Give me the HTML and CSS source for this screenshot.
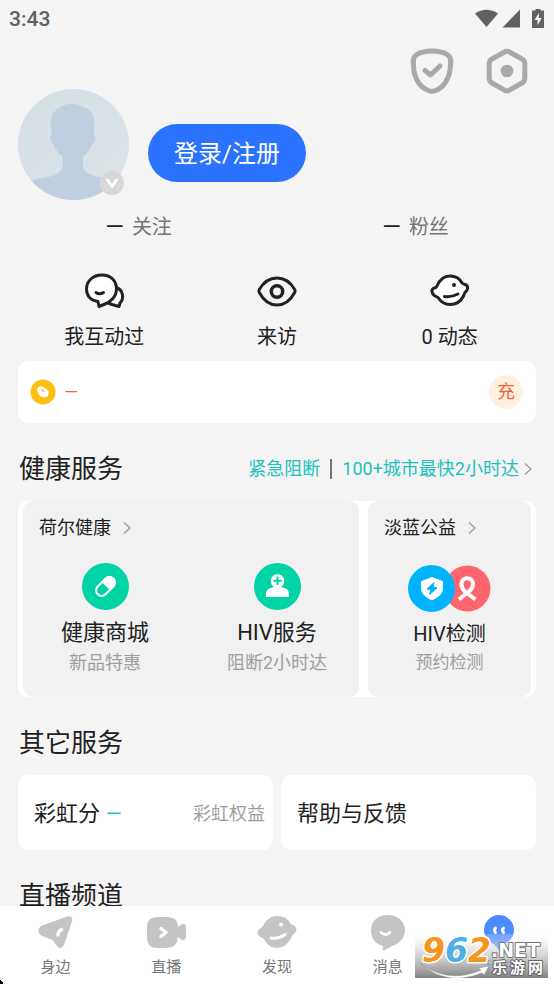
FILE: index.html
```html
<!DOCTYPE html>
<html lang="zh-CN">
<head>
<meta charset="utf-8">
<meta name="viewport" content="width=device-width, initial-scale=1">
<title>我的</title>
<link rel="stylesheet" href="styles.css">
</head>
<body>
<svg class="defs" width="0" height="0" aria-hidden="true">
  <symbol id="chevron" viewBox="0 0 8 14"><path d="M1 1.500L7 7L1 12.500" fill="none" stroke="currentColor" stroke-width="1.500"/></symbol>
</svg>
<header class="status">
  <span>3:43</span>
  <svg width="72" height="20" viewBox="0 0 72 20" fill="#616161" aria-hidden="true">
    <path d="M1 4.500Q12.500-3 24 4.500L12.500 18Z"/>
    <path d="M46 0.500V18.500H28.500Z"/>
    <path d="M61.500-.5h5v2h3.500v17.500h-12V1.500H61.500Z"/>
    <path d="M65 4L60.500 11h3v5.500L67.700 9h-2.900Z" fill="#f4f4f4"/>
  </svg>
</header>
<main>
  <div class="tools">
    <button aria-label="安全中心"><svg width="44" height="46" viewBox="0 0 44 46" fill="none" stroke="#a9a9a9" stroke-width="5" stroke-linecap="round" stroke-linejoin="round"><path d="M22 3C29 3 34 4 38 7C41 9 41 12 40.500 17C40 31 33 40 25.500 42.500Q22 44 18.500 42.500C11 40 3.500 31 3.500 17C3 12 3 9 6 7C10 4 15 3 22 3Z"/><path d="M15 22.500L20.500 27L30 18"/></svg></button>
    <button aria-label="设置"><svg width="44" height="46" viewBox="0 0 44 46" fill="none" stroke="#a9a9a9" stroke-width="5" stroke-linejoin="round"><path d="M19.500 4Q22 2.500 24.500 4L37 11Q39.800 12.500 39.800 16V30Q39.800 33.500 37 35L24.500 42.200Q22 43.500 19.500 42.200L7 35Q4.200 33.500 4.200 30V16Q4.200 12.500 7 11Z"/><circle cx="22" cy="23" r="6.300" fill="#a9a9a9" stroke="none"/></svg></button>
  </div>
  <section class="profile">
    <div class="avatar">
      <svg width="111" height="111" viewBox="0 0 111 111" aria-hidden="true">
        <defs><clipPath id="round"><circle cx="55.500" cy="55.500" r="55.500"/></clipPath><linearGradient id="sky" x2="1" y2="1"><stop stop-color="#d5dee3"/><stop offset="1" stop-color="#dce5e8"/></linearGradient></defs>
        <g clip-path="url(#round)"><path fill="url(#sky)" d="M0 0H111V111H0Z"/><path fill="#c0cfdf" d="M53 15C59 14 62 17 65 18C74 20 78 29 76 40L76 45C79 49 77 54 73 57C71 62 68 66 65 68V78C67 84 74 87 82 88C91 88 99 91 103 99V112H10V94C17 89 26 89 34 87C40 85 44 82 45 77V68C41 66 38 61 36 56C32 53 31 48 34 44C31 34 32 24 41 19C44 16 48 15 53 15Z"/></g>
      </svg>
      <svg class="badge" width="24" height="24" viewBox="0 0 24 24" aria-hidden="true"><circle cx="12" cy="12" r="12" fill="#d8d8d8"/><path d="M7.500 9L12 15.500L16.500 9" fill="none" stroke="#fff" stroke-width="3" stroke-linecap="round" stroke-linejoin="round"/></svg>
    </div>
    <button class="login">登录/注册</button>
  </section>
  <section class="follow">
    <a href="#following"><b>—</b>关注</a>
    <a href="#fans"><b>—</b>粉丝</a>
  </section>
  <section class="activity">
    <a href="#interactions"><svg width="42" height="40" viewBox="0 0 42 40" fill="#fff" stroke="#212121" stroke-width="3" stroke-linejoin="round" stroke-linecap="round"><path d="M33 16.500C41 19 41 28 37 32L36 35.500L29 33.500L23 31Z"/><path d="M19 4C28 4 33.500 10 33.500 18C33.500 26 27 31 22 33L16 35.500L15 30.500C8 29.500 3.500 25 3.500 18C3.500 10 10 4 19 4Z"/><path d="M13 21.500Q16.500 24 20.500 21.500" fill="none"/></svg>我互动过</a>
    <a href="#visits"><svg width="42" height="40" viewBox="0 0 42 40" fill="none" stroke="#212121" stroke-width="3"><path d="M3.300 18.500Q10 7 21 7T38.700 18.500Q39.500 20 38.700 21.500Q32 34 21 34T3.300 21.500Q2.500 20 3.300 18.500Z"/><circle cx="21" cy="20.500" r="5.700" stroke-width="3.500"/></svg>来访</a>
    <a href="#posts"><svg width="42" height="40" viewBox="0 0 42 40" fill="#fff" stroke="#212121" stroke-width="3" stroke-linejoin="round" stroke-linecap="round"><path d="M8 15C11 8 15 5 21 5C27 5 31 8 33 12Q34 13 36 13.500C40 15 39 19 36 21.500Q35 23 34.500 25C32 30 27 33.500 21 33.500C15 33.500 12 31 9 26.500L6 25C2 22 2 19 5 17Q7 17 8 15Z"/><path d="M15.500 25.500Q22 26.500 29 23" fill="none"/><circle cx="25" cy="14" r="2" fill="#212121" stroke="none"/></svg>0 动态</a>
  </section>
  <section class="wallet">
    <svg width="26" height="26" viewBox="0 0 26 26" aria-hidden="true"><circle cx="13" cy="13" r="12.500" fill="#fdbf0f"/><path d="M8 8.500C10 6.500 13 7 15 9.500C18 10 20 13 18 16.500C15 20 10 18 8.500 15C7 12 6.500 10 8 8.500Z" fill="#fff"/><path d="M12 10.500L13.500 12.500" stroke="#fdbf0f" stroke-width="1.500" stroke-linecap="round"/></svg>
    <span>—</span>
    <button>充</button>
  </section>
  <div class="heading">
    <h2>健康服务</h2>
    <a href="#urgent"><span>紧急阻断</span><i></i><span>100+城市最快2小时达</span><svg width="8" height="14"><use href="#chevron"/></svg></a>
  </div>
  <section class="health">
    <div class="panel wide">
      <a class="brand" href="#holmes">荷尔健康<svg width="8" height="14"><use href="#chevron"/></svg></a>
      <div class="services">
        <a href="#mall"><svg width="47" height="47" viewBox="0 0 47 47"><circle cx="23.500" cy="23.500" r="23.500" fill="#00d4a7"/><g transform="rotate(45 23.500 23.500)"><rect x="18" y="12.500" width="11" height="22" rx="5.500" fill="none" stroke="#fff" stroke-width="2"/><path d="M17 23V18A6.500 6.500 0 0 1 30 18V23Z" fill="#fff"/></g></svg><strong>健康商城</strong><small>新品特惠</small></a>
        <a href="#hiv"><svg width="47" height="47" viewBox="0 0 47 47"><circle cx="23.500" cy="23.500" r="23.500" fill="#00d4a7"/><path d="M12 34V31C12 26 16 25 20 24Q16 21 17 16A6.800 6.800 0 0 1 30 16Q31 21 27 24C31 25 35 26 35 31V34Z" fill="#fff"/><path d="M23.500 13.500V22M19.300 17.800H27.700" stroke="#00d4a7" stroke-width="2"/></svg><strong>HIV服务</strong><small>阻断2小时达</small></a>
      </div>
    </div>
    <div class="panel narrow">
      <a class="brand" href="#charity">淡蓝公益<svg width="8" height="14"><use href="#chevron"/></svg></a>
      <div class="services">
        <a href="#test"><svg width="83" height="47" viewBox="0 0 83 47"><circle cx="59.500" cy="23.500" r="23" fill="#fe656d"/><path d="M51 34.500L61 26.500Q65 23 65 19A5.800 5.800 0 0 0 53.400 19Q53.400 23 57 26.500L67.500 34.500" fill="none" stroke="#fff" stroke-width="4"/><circle cx="23.500" cy="23.500" r="23.500" fill="#00b3fe"/><path d="M24 12.500L34.500 16.500V23C34.500 29 30 32 24 35C18 32 13.500 29 13.500 23V16.500Z" fill="#fff" stroke="#fff" stroke-linejoin="round"/><path d="M26 17.500L19 24L23 24.500L21.500 29.500L29 23L25 22Z" fill="#00b3fe" stroke="#00b3fe" stroke-linejoin="round"/></svg><strong>HIV检测</strong><small>预约检测</small></a>
      </div>
    </div>
  </section>
  <div class="heading"><h2>其它服务</h2></div>
  <section class="others">
    <a href="#rainbow">彩虹分<b>—</b><small>彩虹权益</small></a>
    <a href="#help">帮助与反馈</a>
  </section>
  <div class="heading"><h2>直播频道</h2></div>
</main>
<nav>
  <a href="#near"><svg width="42" height="40" viewBox="0 0 42 40"><path d="M7 14L33 4.500Q39 3 38 9L30 33Q26.500 39 23 34L19.500 29Q18 27 15 26.500L8 24Q1 19 7 14Z" fill="#c4c4c4"/><path d="M24 23Q24 19.500 27.500 17.500" stroke="#fff" stroke-width="3.500" stroke-linecap="round" fill="none"/></svg>身边</a>
  <a href="#live"><svg width="42" height="40" viewBox="0 0 42 40"><path d="M12 5H22Q33 5 33 15L37 12Q41 11 41 16V25Q40 29 37 28L33 25Q32 36 22 36H12Q2 36 2 26V15Q2 5 12 5Z" fill="#c4c4c4"/><path d="M16 16.500L21 20.500L16 24.500" stroke="#fff" stroke-width="3.500" stroke-linecap="round" stroke-linejoin="round" fill="none"/></svg>直播</a>
  <a href="#discover"><svg width="42" height="40" viewBox="0 0 42 40"><path d="M7 14C11 7 15 4 21 4C28 4 32 7 34 11Q35 12.500 37 13C42 15 41 20 37 22.500Q36 24 35 26C32 32 27 36 21 36C15 36 10 32 8 27L5 25.500C0 22 1 18 5 16Q6.500 15.500 7 14Z" fill="#c4c4c4"/><path d="M15 26Q23 27 29 22.500" stroke="#fff" stroke-width="3" stroke-linecap="round" fill="none"/><circle cx="25" cy="12.500" r="2" fill="#fff"/></svg>发现</a>
  <a href="#messages"><svg width="42" height="40" viewBox="0 0 42 40"><path d="M21 3C31 3 38 10 38 18C38 27 31 32 25 34L18 38Q15 40 16 34C8 32 4 26 4 18C4 9 11 3 21 3Z" fill="#c4c4c4"/><path d="M14 20.500Q18.500 24.500 23 20.500" stroke="#fff" stroke-width="3" stroke-linecap="round" fill="none"/></svg>消息</a>
  <a class="active" href="#me"><svg width="42" height="40" viewBox="0 0 42 40"><circle cx="21" cy="18" r="15" fill="#4d8cff"/><path d="M15 31L21 38L27 31Z" fill="#4d8cff"/><path d="M17.500 16Q15.500 18 17.500 20.500M25.500 16Q23.500 18 25.500 20.500" stroke="#fff" stroke-width="3" stroke-linecap="round" fill="none"/></svg>我的</a>
  <svg class="corner" width="3" height="4" aria-hidden="true"><path d="M0 0h1v1h1v1h1v2H0Z"/></svg>
  <svg class="mark" width="133" height="44" viewBox="0 0 133 44" role="img" aria-label="962.NET 乐游网">
    <defs><linearGradient id="shade" x2="0" y2="1"><stop stop-color="#fff" stop-opacity=".2"/><stop offset=".45" stop-color="#c4c4c4" stop-opacity=".65"/><stop offset="1" stop-color="#7c7c7c" stop-opacity=".95"/></linearGradient></defs>
    <path d="M0 0H133V44H0Z" fill="url(#shade)"/>
    <path d="M6 30Q34 50 66 36L63 34L74 32L69 41L67 39Q32 53 6 30Z" fill="#fff" stroke="#888" stroke-width=".5"/>
    <g class="mark-number"><text x="7" y="28" fill="#f7941e">9</text><text x="30" y="28" fill="#4eaee5">6</text><text x="53" y="28" fill="#f7941e">2</text></g>
    <text class="mark-net" x="76" y="23">.NET</text>
    <text class="mark-name" x="77" y="39">乐</text><text class="mark-name" x="95" y="39">游</text><text class="mark-name" x="113" y="39">网</text>
  </svg>
</nav>
</body>
</html>
```
FILE: styles.css
```css
* { box-sizing: border-box; }
body {
  margin: 0;
  height: 100vh;
  display: flex;
  flex-direction: column;
  overflow: hidden;
  background: #f4f4f4;
  color: #212121;
  font-family: Roboto, "Noto Sans CJK SC", sans-serif;
  font-size: 20px;
  line-height: 30px;
}
a { color: inherit; text-decoration: none; }
button { border: 0; padding: 0; background: none; font: inherit; cursor: pointer; }
svg { display: block; flex: none; }
h2, b, strong, small { margin: 0; font-weight: 400; }
.defs { position: absolute; }

.status {
  flex: none;
  height: 38px;
  padding: 0 8px 0 9px;
  display: flex;
  align-items: center;
  justify-content: space-between;
  color: #616161;
  font-size: 21px;
  font-weight: 500;
}

main { flex: 1; min-height: 0; overflow: hidden; padding: 10px 18px 0; }
.tools { display: flex; justify-content: flex-end; gap: 31px; padding-right: 7px; height: 41px; }
.tools button { height: 46px; }

.profile { display: flex; align-items: center; gap: 19px; }
.avatar { position: relative; }
.badge { position: absolute; right: 5px; bottom: 5px; }
.login {
  height: 58px;
  padding: 2px 26px 0;
  margin-top: 16px;
  border-radius: 29px;
  background: #2b73ff;
  color: #fff;
  font-size: 24px;
}

.follow { display: flex; height: 50px; margin: 0 -18px; padding-top: 4px; color: #757575; }
.follow a { flex: 1; display: flex; align-items: center; justify-content: center; gap: 8px; }
.follow b { color: #212121; font-size: 24px; }

.activity { display: flex; padding-top: 21px; }
.activity a { flex: 1; display: flex; flex-direction: column; align-items: center; gap: 11px; }

.wallet {
  height: 62px;
  margin-top: 9px;
  padding: 0 13px 0 12px;
  display: flex;
  align-items: center;
  gap: 8px;
  border-radius: 10px;
  background: #fff;
  color: #f0643c;
}
.wallet span { font-size: 18px; }
.wallet button {
  width: 34px;
  height: 34px;
  margin-left: auto;
  border-radius: 50%;
  background: #fff1de;
  color: #f0643c;
  font-size: 18px;
}

.heading { display: flex; align-items: center; justify-content: space-between; height: 78px; padding: 14px 4px 0 1px; }
.heading h2 { font-size: 26px; }
.heading a { display: flex; align-items: center; color: #1cc0c0; font-size: 18px; }
.heading i { width: 2px; height: 20px; margin: 0 10px; background: #757575; }
.heading svg { margin-left: 5px; color: #9e9e9e; }

.health { display: flex; gap: 9px; padding: 0 5px; border-radius: 10px; background: #fff; }
.panel { height: 196px; padding-top: 12px; border-radius: 10px; background: #f1f1f1; }
.wide { flex: 336; }
.narrow { flex: 163; }
.brand { display: flex; align-items: center; gap: 12px; padding-left: 16px; font-size: 18px; }
.brand svg { color: #9e9e9e; }
.services { display: flex; margin: 0 -4px; padding-top: 20px; }
.services a { flex: 1; display: flex; flex-direction: column; align-items: center; }
.services strong { margin-top: 7px; font-size: 22px; line-height: 32px; }
.services small { color: #9e9e9e; font-size: 18px; line-height: 27px; }
.narrow .services { padding-top: 22px; }
.narrow strong { margin-top: 6px; font-size: 20px; }
.narrow small { font-size: 17px; line-height: 24px; }

.others { display: grid; grid-template-columns: 1fr 1fr; gap: 8px; }
.others a {
  height: 75px;
  padding: 2px 8px 0 16px;
  display: flex;
  align-items: center;
  border-radius: 10px;
  background: #fff;
  font-size: 22px;
}
.others b { margin-left: 6px; color: #1cc0c0; font-size: 20px; }
.others small { margin-left: auto; color: #9e9e9e; font-size: 18px; }

nav {
  position: relative;
  flex: none;
  height: 78px;
  padding-top: 6px;
  display: flex;
  background: #fff;
  color: #757575;
  font-size: 15px;
}
nav a { flex: 1; display: flex; flex-direction: column; align-items: center; line-height: 30px; }
.active { color: #4d8cff; }
.corner { position: absolute; left: 0; bottom: 0; }
.mark { position: absolute; right: 6px; bottom: 6px; }
.mark text { paint-order: stroke; stroke-linejoin: round; }
.mark-number { font: italic 700 33px "DejaVu Sans", sans-serif; stroke: #fff; stroke-width: 3px; }
.mark-net { font: 700 19px "DejaVu Sans", sans-serif; fill: #fff; stroke: #777; stroke-width: 2px; }
.mark-name { font: 700 15px "Noto Sans CJK SC", sans-serif; fill: #fff; stroke: #666; stroke-width: 2px; }
```
